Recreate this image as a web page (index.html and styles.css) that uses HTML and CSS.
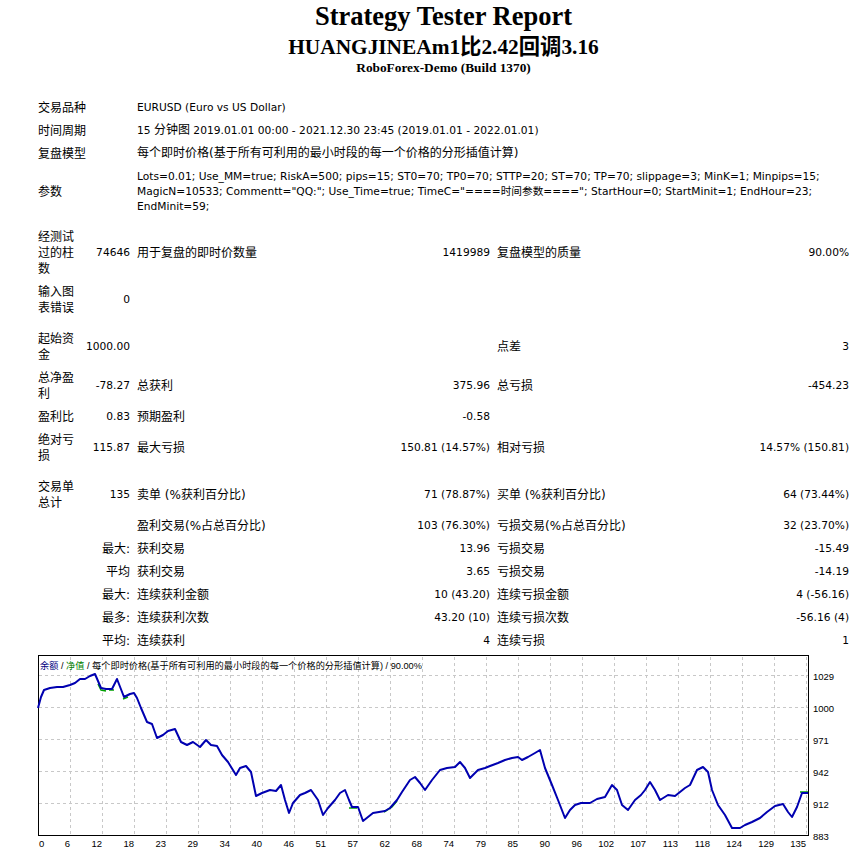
FILE: index.html
```html
<!DOCTYPE html>
<html lang="zh-CN">
<head>
<meta charset="utf-8">
<title>Strategy Tester: HUANGJINEAm1比2.42回调3.16</title>
<link rel="stylesheet" href="styles.css">
</head>
<body>
<div class="report">
  <header class="head">
    <h1 class="title">Strategy Tester Report</h1>
    <div class="name">HUANGJINEAm1比2.42回调3.16</div>
    <div class="server">RoboForex-Demo (Build 1370)</div>
  </header>

  <table class="stats">
    <colgroup>
      <col class="c1"><col class="c2"><col class="c3"><col class="c4"><col class="c5"><col class="c6">
    </colgroup>
    <tr><td colspan="2" class="k">交易品种</td><td colspan="4">EURUSD (Euro vs US Dollar)</td></tr>
    <tr><td colspan="2" class="k">时间周期</td><td colspan="4">15 <span class="zh">分钟图</span> 2019.01.01 00:00 - 2021.12.30 23:45 (2019.01.01 - 2022.01.01)</td></tr>
    <tr><td colspan="2" class="k">复盘模型</td><td colspan="4"><span class="zh">每个即时价格(基于所有可利用的最小时段的每一个价格的分形插值计算)</span></td></tr>
    <tr><td colspan="2" class="k">参数</td><td colspan="4" class="params">Lots=0.01; Use_MM=true; RiskA=500; pips=15; ST0=70; TP0=70; STTP=20; ST=70; TP=70; slippage=3; MinK=1; Minpips=15; MagicN=10533; Commentt="QQ:"; Use_Time=true; TimeC="====时间参数===="; StartHour=0; StartMinit=1; EndHour=23; EndMinit=59;</td></tr>
    <tr class="gap"><td colspan="6"></td></tr>
    <tr><td class="k">经测试过的柱数</td><td class="n">74646</td><td class="k">用于复盘的即时价数量</td><td class="n">1419989</td><td class="k">复盘模型的质量</td><td class="n">90.00%</td></tr>
    <tr><td class="k">输入图表错误</td><td class="n">0</td><td colspan="4"></td></tr>
    <tr class="gap"><td colspan="6"></td></tr>
    <tr><td class="k">起始资金</td><td class="n">1000.00</td><td></td><td></td><td class="k">点差</td><td class="n">3</td></tr>
    <tr><td class="k">总净盈利</td><td class="n">-78.27</td><td class="k">总获利</td><td class="n">375.96</td><td class="k">总亏损</td><td class="n">-454.23</td></tr>
    <tr><td class="k">盈利比</td><td class="n">0.83</td><td class="k">预期盈利</td><td class="n">-0.58</td><td></td><td></td></tr>
    <tr><td class="k">绝对亏损</td><td class="n">115.87</td><td class="k">最大亏损</td><td class="n">150.81 (14.57%)</td><td class="k">相对亏损</td><td class="n">14.57% (150.81)</td></tr>
    <tr class="gap"><td colspan="6"></td></tr>
    <tr><td class="k">交易单总计</td><td class="n">135</td><td class="k">卖单 (%获利百分比)</td><td class="n">71 (78.87%)</td><td class="k">买单 (%获利百分比)</td><td class="n">64 (73.44%)</td></tr>
    <tr><td></td><td></td><td class="k">盈利交易(%占总百分比)</td><td class="n">103 (76.30%)</td><td class="k">亏损交易(%占总百分比)</td><td class="n">32 (23.70%)</td></tr>
    <tr><td></td><td class="k n">最大:</td><td class="k">获利交易</td><td class="n">13.96</td><td class="k">亏损交易</td><td class="n">-15.49</td></tr>
    <tr><td></td><td class="k n">平均</td><td class="k">获利交易</td><td class="n">3.65</td><td class="k">亏损交易</td><td class="n">-14.19</td></tr>
    <tr><td></td><td class="k n">最大:</td><td class="k">连续获利金额</td><td class="n">10 (43.20)</td><td class="k">连续亏损金额</td><td class="n">4 (-56.16)</td></tr>
    <tr><td></td><td class="k n">最多:</td><td class="k">连续获利次数</td><td class="n">43.20 (10)</td><td class="k">连续亏损次数</td><td class="n">-56.16 (4)</td></tr>
    <tr><td></td><td class="k n">平均:</td><td class="k">连续获利</td><td class="n">4</td><td class="k">连续亏损</td><td class="n">1</td></tr>
  </table>

  <svg class="chart" viewBox="0 653 863 200" width="863" height="200" xmlns="http://www.w3.org/2000/svg">
    <rect x="0" y="653" width="863" height="200" fill="#fff"/>
    <g class="grid" stroke="#c8c8c8" stroke-width="1" stroke-dasharray="3,3" fill="none">
      <line x1="39" y1="675.5" x2="808" y2="675.5"/>
      <line x1="39" y1="707.5" x2="808" y2="707.5"/>
      <line x1="39" y1="739.5" x2="808" y2="739.5"/>
      <line x1="39" y1="771.5" x2="808" y2="771.5"/>
      <line x1="39" y1="803.5" x2="808" y2="803.5"/>
      <line x1="70.5" y1="657" x2="70.5" y2="835"/>
      <line x1="102.5" y1="657" x2="102.5" y2="835"/>
      <line x1="134.5" y1="657" x2="134.5" y2="835"/>
      <line x1="166.5" y1="657" x2="166.5" y2="835"/>
      <line x1="198.5" y1="657" x2="198.5" y2="835"/>
      <line x1="230.5" y1="657" x2="230.5" y2="835"/>
      <line x1="262.5" y1="657" x2="262.5" y2="835"/>
      <line x1="294.5" y1="657" x2="294.5" y2="835"/>
      <line x1="326.5" y1="657" x2="326.5" y2="835"/>
      <line x1="358.5" y1="657" x2="358.5" y2="835"/>
      <line x1="390.5" y1="657" x2="390.5" y2="835"/>
      <line x1="422.5" y1="657" x2="422.5" y2="835"/>
      <line x1="454.5" y1="657" x2="454.5" y2="835"/>
      <line x1="486.5" y1="657" x2="486.5" y2="835"/>
      <line x1="518.5" y1="657" x2="518.5" y2="835"/>
      <line x1="550.5" y1="657" x2="550.5" y2="835"/>
      <line x1="582.5" y1="657" x2="582.5" y2="835"/>
      <line x1="614.5" y1="657" x2="614.5" y2="835"/>
      <line x1="646.5" y1="657" x2="646.5" y2="835"/>
      <line x1="678.5" y1="657" x2="678.5" y2="835"/>
      <line x1="710.5" y1="657" x2="710.5" y2="835"/>
      <line x1="742.5" y1="657" x2="742.5" y2="835"/>
      <line x1="774.5" y1="657" x2="774.5" y2="835"/>
      <line x1="806.5" y1="657" x2="806.5" y2="835"/>
    </g>
    <rect x="38.5" y="655.5" width="770" height="180" fill="none" stroke="#000" stroke-width="1"/>

    <text class="legend" x="40" y="668.5"><tspan fill="#000080">余额</tspan> / <tspan fill="#008000">净值</tspan> / 每个即时价格(基于所有可利用的最小时段的每一个价格的分形插值计算) / 90.00%</text>

    <g class="eq" fill="none" stroke="#00a000" stroke-width="1.5">
      <polyline points="98,684 101,690 106,691"/>
      <polyline points="109,690 114,690"/>
      <polyline points="123,699 128,697"/>
      <polyline points="349,808 357,808"/>
      <polyline points="384,812 392,807 397,801"/>
      <polyline points="800,792 808,792"/>
    </g>
    <polyline class="bal" fill="none" stroke="#0000b0" stroke-width="2" stroke-linejoin="round" points="38,708 41,697 44,690 50,688 57,687 63,687 70,685 75,683 80,679 85,679 90,676 95,674 98,681 101,688 106,689 112,689 117,679 124,697 130,694 134,693 137,698 141,708 144,715 147,722 152,724 157,738 163,735 168,731 175,729 181,742 187,745 193,742 200,747 206,740 211,745 217,746 222,755 228,762 236,775 240,768 246,766 251,772 256,796 262,793 270,790 276,791 281,785 285,800 289,813 293,803 300,795 305,793 311,790 318,800 323,815 328,808 335,800 340,793 345,790 349,800 352,807 358,807 363,821 373,813 385,811 390,808 397,800 402,792 410,780 415,777 420,783 425,790 432,780 440,770 447,768 455,767 460,762 465,768 470,778 478,770 485,768 490,766 498,763 505,760 512,758 518,757 522,760 528,757 535,753 540,750 545,768 552,785 558,800 565,818 570,810 575,805 581,803 590,803 597,799 605,797 612,785 617,790 622,805 628,810 635,800 641,795 645,790 650,782 655,790 660,800 668,795 675,796 680,792 685,788 690,785 697,770 703,767 708,772 712,790 718,805 725,815 732,828 740,828 745,825 752,822 760,818 767,812 775,806 783,804 788,812 792,817 797,807 802,793 808,793"/>

    <g class="axis">
      <text x="813" y="679.5">1029</text>
      <text x="813" y="711.5">1000</text>
      <text x="813" y="743.5">971</text>
      <text x="813" y="775.5">942</text>
      <text x="813" y="807.5">912</text>
      <text x="813" y="839.5">883</text>
    </g>
    <g class="axis xaxis">
      <text x="39" y="846.5" class="first">0</text>
      <text x="70" y="846.5">6</text>
      <text x="102" y="846.5">12</text>
      <text x="134" y="846.5">18</text>
      <text x="166" y="846.5">23</text>
      <text x="198" y="846.5">29</text>
      <text x="230" y="846.5">34</text>
      <text x="262" y="846.5">40</text>
      <text x="294" y="846.5">46</text>
      <text x="326" y="846.5">51</text>
      <text x="358" y="846.5">57</text>
      <text x="390" y="846.5">62</text>
      <text x="422" y="846.5">68</text>
      <text x="454" y="846.5">74</text>
      <text x="486" y="846.5">79</text>
      <text x="518" y="846.5">85</text>
      <text x="550" y="846.5">90</text>
      <text x="582" y="846.5">96</text>
      <text x="614" y="846.5">102</text>
      <text x="646" y="846.5">107</text>
      <text x="678" y="846.5">113</text>
      <text x="710" y="846.5">118</text>
      <text x="742" y="846.5">124</text>
      <text x="774" y="846.5">129</text>
      <text x="806" y="846.5">135</text>
    </g>
  </svg>
</div>
</body>
</html>
```

FILE: styles.css
```css
html, body {
  margin: 0;
  padding: 0;
  background: #fff;
  color: #000;
}

.report {
  width: 863px;
}

.head {
  padding-left: 24px;
  text-align: center;
  font-family: "Liberation Serif", "Noto Sans CJK SC", serif;
  font-weight: bold;
}

.title {
  margin: 0;
  padding-top: 1px;
  font-size: 26.5px;
  line-height: 30px;
  font-weight: bold;
}

.name {
  padding-top: 3px;
  font-size: 21.33px;
  line-height: 26px;
}

.server {
  font-size: 13.33px;
  line-height: 16px;
}

.stats {
  margin: 20px 0 0 34px;
  width: 819px;
  table-layout: fixed;
  border-collapse: separate;
  border-spacing: 1px;
}

.c1 { width: 46px; }
.c2 { width: 51px; }
.c3 { width: 200px; }
.c4 { width: 158px; }
.c5 { width: 200px; }
.c6 { width: 157px; }

.stats td {
  padding: 3px;
  font-family: "DejaVu Sans", "Noto Sans CJK SC", sans-serif;
  font-size: 10.67px;
  line-height: 16px;
  text-align: left;
  vertical-align: middle;
  white-space: normal;
}

.stats td.k {
  font-size: 12px;
}

.stats td.n {
  text-align: right;
}

.stats .zh {
  font-size: 12px;
  line-height: 14px;
}

.stats td.params {
  line-height: 15px;
}

.stats tr.gap td {
  padding: 0;
  height: 7px;
  line-height: 0;
}

.chart {
  display: block;
}

.legend {
  font-family: "Liberation Sans", "Noto Sans CJK SC", sans-serif;
  font-size: 9.2px;
  fill: #000;
}

.axis text {
  font-family: "Liberation Sans", sans-serif;
  font-size: 9.5px;
  fill: #000;
}

.xaxis text {
  text-anchor: end;
}

.xaxis text.first {
  text-anchor: start;
}
```
